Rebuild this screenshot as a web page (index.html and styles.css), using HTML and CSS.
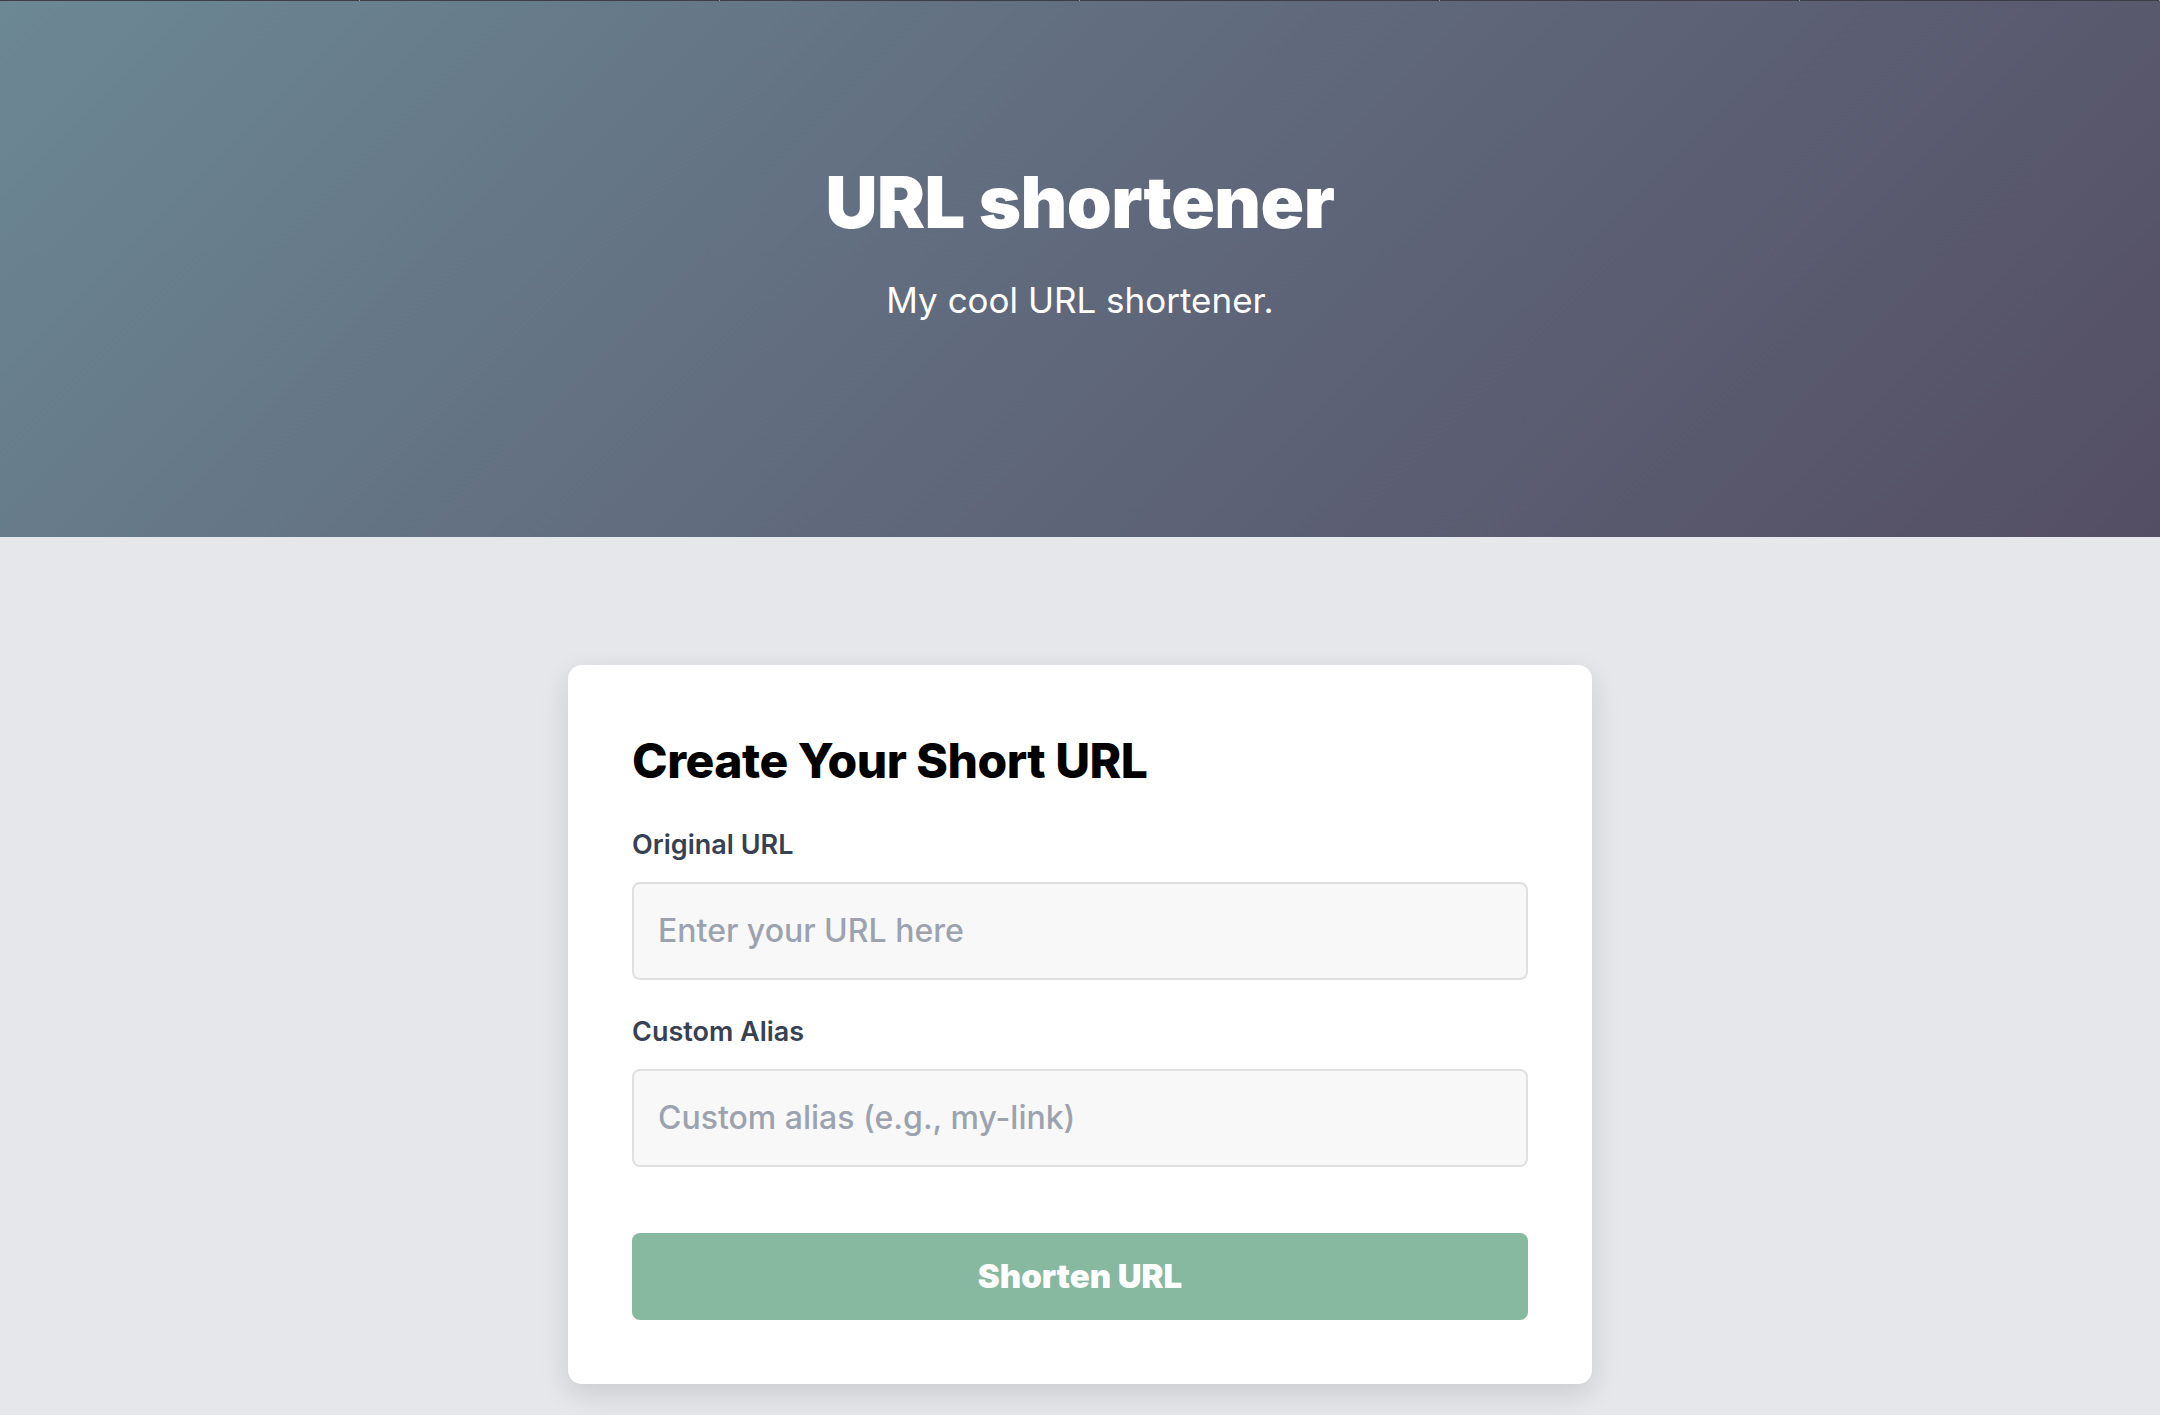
FILE: index.html
```html
<!DOCTYPE html>
<html lang="en">
<head>
  <meta charset="UTF-8">
  <meta name="viewport" content="width=device-width, initial-scale=1.0">
  <title>URL shortener</title>
  <link rel="stylesheet" href="styles.css">
</head>
<body>
  <div class="topline"></div>
  <header class="hero">
    <h1>URL shortener</h1>
    <p>My cool URL shortener.</p>
  </header>

  <main class="main">
    <form class="card" method="POST" action="/shorten">
      <h2>Create Your Short URL</h2>

      <label for="url">Original URL</label>
      <input type="text" id="url" name="url" placeholder="Enter your URL here">

      <label for="alias" class="second">Custom Alias</label>
      <input type="text" id="alias" name="alias" placeholder="Custom alias (e.g., my-link)">

      <button type="submit">Shorten URL</button>
    </form>
  </main>
</body>
</html>
```

FILE: styles.css
```css
* {
  box-sizing: border-box;
}
body {
  margin: 0;
  font-family: Inter, 'Noto Sans', sans-serif;
  background: #e5e7eb;
  color: #000;
}
.topline {
  height: 1px;
  background: repeating-linear-gradient(to right, #3d3d46 0 359px, #9a9aa2 359px 360px);
}
.hero {
  height: 536px;
  background: linear-gradient(135deg, #6c8894 0%, #60697c 50%, #544e64 100%);
  color: #fff;
  text-align: center;
  padding-top: 158px;
}
.hero h1 {
  margin: 0;
  font-size: 72px;
  font-weight: 900;
  letter-spacing: -0.5px;
  line-height: 1.2;
}
.hero p {
  margin: 34px 0 0;
  font-size: 35px;
  line-height: 1.2;
}
.main {
  padding: 128px 0 31px;
}
.card {
  width: 1024px;
  margin: 0 auto;
  background: #fff;
  border-radius: 14px;
  padding: 67px 64px 64px;
  display: flex;
  flex-direction: column;
  box-shadow: 0 10px 30px rgba(0, 0, 0, 0.12);
}
.card h2 {
  margin: 0 0 40px;
  font-size: 48px;
  font-weight: 800;
  letter-spacing: -0.5px;
  line-height: 1.2;
}
label {
  font-size: 27px;
  font-weight: 600;
  color: #374151;
  line-height: 30px;
  margin-bottom: 22px;
}
label.second {
  margin-top: 37px;
}
input {
  height: 98px;
  padding: 0 24px;
  font-family: inherit;
  font-size: 32px;
  font-weight: 500;
  background: #f8f8f8;
  border: 2px solid #e0e0e2;
  border-radius: 8px;
  color: #111;
}
input::placeholder {
  color: #9ca3af;
}
button {
  margin-top: 66px;
  height: 87px;
  border: none;
  border-radius: 8px;
  background: #86b9a0;
  color: #fff;
  font-family: inherit;
  font-size: 33px;
  font-weight: 900;
  cursor: pointer;
}
```
